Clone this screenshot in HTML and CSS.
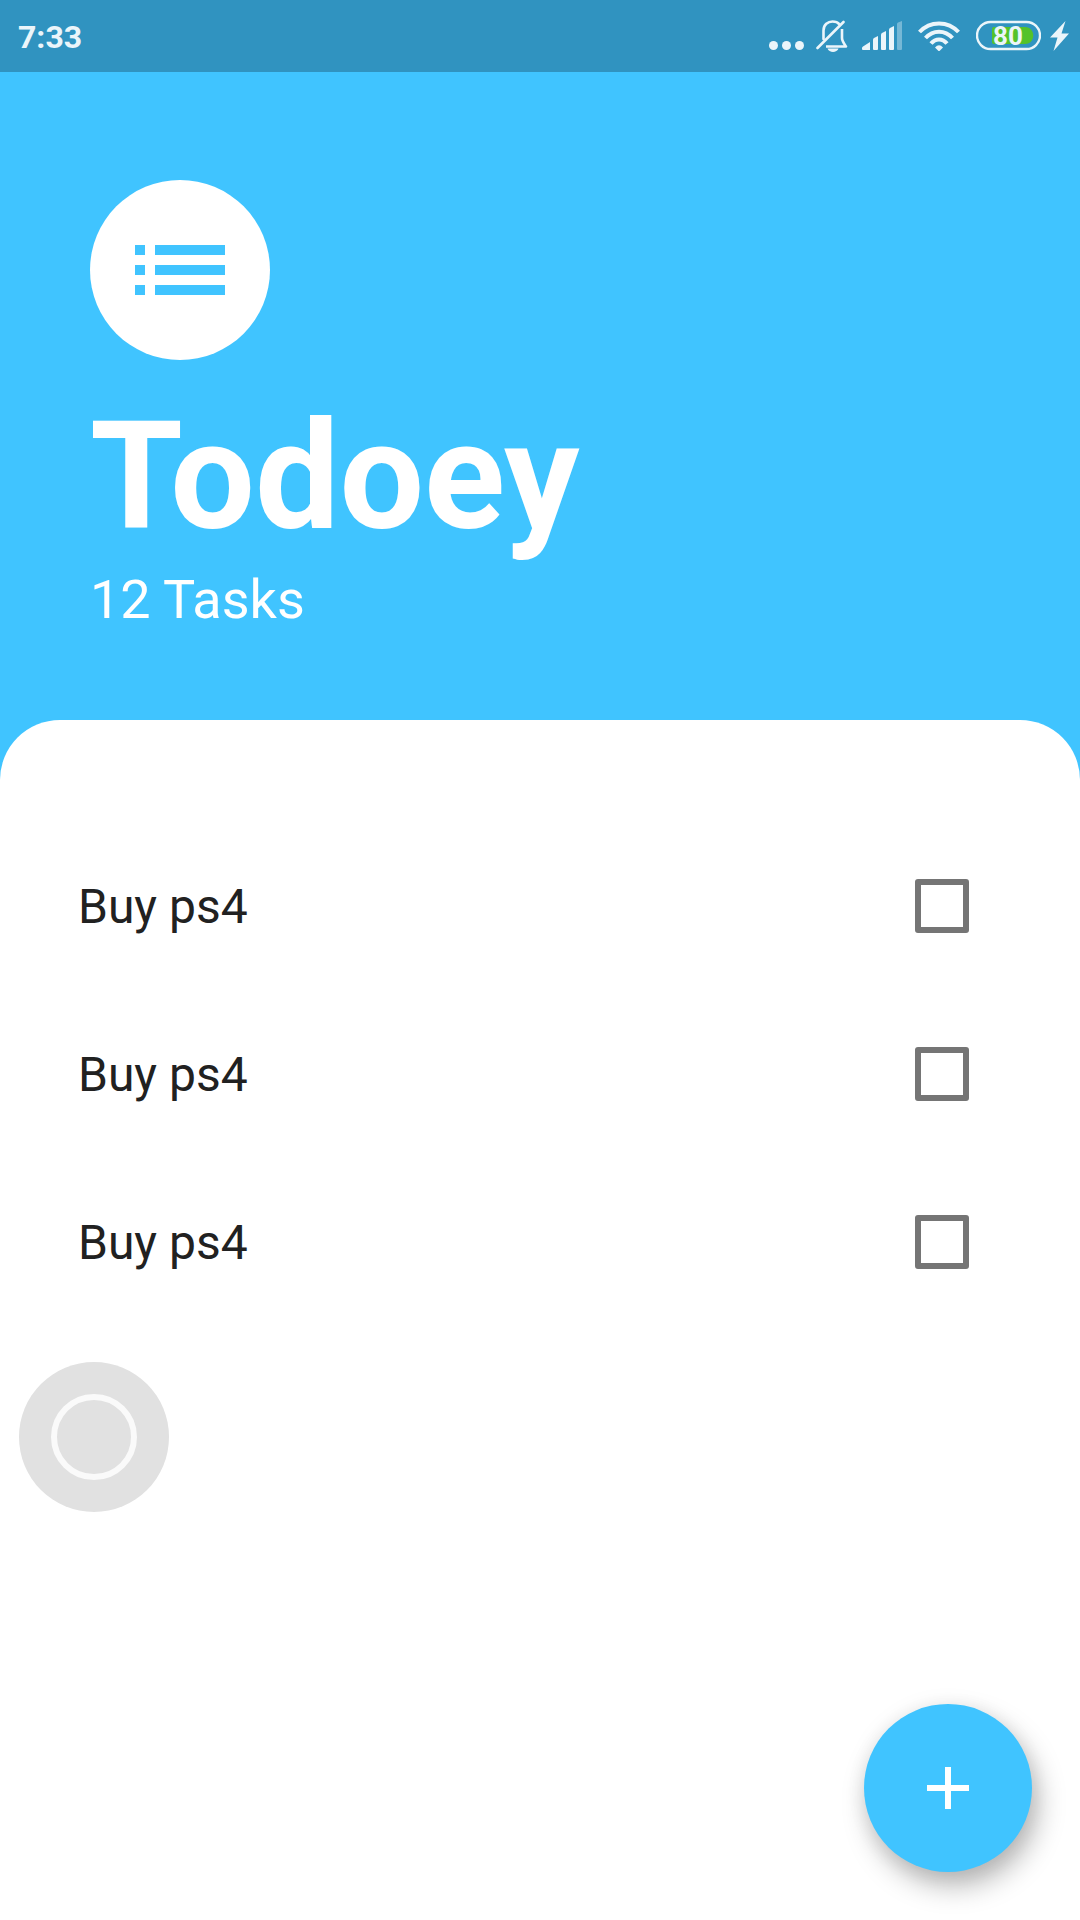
FILE: index.html
```html
<!DOCTYPE html>
<html lang="en">
<head>
<meta charset="utf-8">
<meta name="viewport" content="width=device-width, initial-scale=1">
<title>Todoey</title>
<link rel="stylesheet" href="styles.css">
</head>
<body>
<div class="status-bar">
  <time class="clock">7:33</time>
  <div class="status-icons">
    <svg width="36" height="32" viewBox="0 0 36 32" fill="currentColor" aria-hidden="true">
      <circle cx="5.500" cy="25.500" r="4.500"/><circle cx="18.500" cy="25.500" r="4.500"/><circle cx="31.500" cy="25.500" r="4.500"/>
    </svg>
    <svg class="bell" width="32" height="32" viewBox="0 0 32 32" fill="none" stroke="currentColor" stroke-width="2.6" stroke-linecap="round" stroke-linejoin="round" aria-hidden="true">
      <path d="M7.500 19V10.500C7.500 4.500 12 1.500 16.500 1.500C19.500 1.500 22 2.600 23.500 4.300"/>
      <path d="M26 9V18C26 21 28 23.500 30 26.500H10" stroke-linecap="butt"/>
      <path d="M1.500 28L27.500 2"/>
      <path d="M11.500 28.500H22.500C21 33 13 33 11.500 28.500Z" fill="currentColor" stroke="none"/>
    </svg>
    <svg class="signal" width="40" height="32" viewBox="0 0 40 32" fill="currentColor" aria-hidden="true">
      <path d="M1 26.500L8 22V30H1Q0 30 0 29V28Q0 27 1 26.500Z"/>
      <path d="M11 19.500Q11 18.500 12 18L16 16V29Q16 30 15 30H12Q11 30 11 29Z"/>
      <path d="M19 14.500Q19 13.500 20 13L24 11V29Q24 30 23 30H20Q19 30 19 29Z"/>
      <path d="M27 9.500Q27 8.500 28 8L32 6V29Q32 30 31 30H28Q27 30 27 29Z"/>
      <path opacity=".38" d="M35 4Q35 3 36 2.500L40 1V29Q40 30 39 30H36Q35 30 35 29Z"/>
    </svg>
    <svg class="wifi" width="42" height="32" viewBox="0 0 42 32" fill="none" stroke="currentColor" stroke-width="4" aria-hidden="true">
      <path d="M1.500 12C12 .5 30 .5 40.500 12"/>
      <path d="M7.500 18C15 9.500 27 9.500 34.500 18"/>
      <path d="M13 23.500C17.500 18 24.500 18 29 23.500"/>
      <path d="M17 27.500Q21 23 25 27.500L22 30.500Q21 31.500 20 30.500Z" fill="currentColor" stroke="none"/>
    </svg>
    <svg class="battery" width="65" height="32" viewBox="0 0 65 32" role="img" aria-label="Battery 80%">
      <rect x="1" y="2" width="63" height="27" rx="13.500" fill="none" stroke="currentColor" stroke-width="2.400"/>
      <path fill="#54c22a" d="M18 7H49C60 7 60 24 49 24H18Q16 24 16 22V9Q16 7 18 7Z"/>
      <text class="battery-level" x="32" y="25" text-anchor="middle">80</text>
    </svg>
    <svg class="bolt" width="19" height="32" viewBox="0 0 19 32" fill="currentColor" aria-hidden="true">
      <path d="M15.500 1L0 17.500H7.500L3.500 31L19 13.500H11.500Z"/>
    </svg>
  </div>
</div>
<header class="header">
  <div class="logo">
    <svg width="90" height="50" viewBox="0 0 90 50" fill="currentColor" aria-hidden="true">
      <path d="M0 0H10V10H0ZM20 0H90V10H20ZM0 20H10V30H0ZM20 20H90V30H20ZM0 40H10V50H0ZM20 40H90V50H20Z"/>
    </svg>
  </div>
  <h1 class="title">Todoey</h1>
  <p class="count">12 Tasks</p>
</header>
<main class="sheet">
  <ul class="tasks">
    <li><label class="task"><span class="task-name">Buy ps4</span><input class="check" type="checkbox"></label></li>
    <li><label class="task"><span class="task-name">Buy ps4</span><input class="check" type="checkbox"></label></li>
    <li><label class="task"><span class="task-name">Buy ps4</span><input class="check" type="checkbox"></label></li>
  </ul>
</main>
<button class="assist" type="button" aria-label="Quick menu"></button>
<button class="add" type="button" aria-label="Add task">
  <svg width="42" height="42" viewBox="0 0 42 42" fill="currentColor" aria-hidden="true"><path d="M18 0H24V18H42V24H24V42H18V24H0V18H18Z"/></svg>
</button>
</body>
</html>
```
FILE: styles.css
```css
*,
*::before {
  box-sizing: border-box;
}

body {
  margin: 0;
  min-height: 100vh;
  display: flex;
  flex-direction: column;
  background: #40c4ff;
  font-family: Roboto, "Liberation Sans", sans-serif;
}

svg {
  display: block;
  flex: none;
}

.status-bar {
  display: flex;
  align-items: center;
  justify-content: space-between;
  height: 72px;
  padding: 0 11px 0 18px;
  background: #3093c0;
  color: #ebf5fa;
}

.clock {
  padding-top: 2px;
  font-size: 32px;
  font-weight: 700;
  line-height: 40px;
}

.status-icons {
  display: flex;
  align-items: center;
}

.bell { margin-left: 12px; }
.signal { margin-left: 14px; }
.wifi { margin-left: 16px; }
.battery { margin-left: 16px; }
.bolt { margin-left: 9px; }

.battery-level {
  fill: currentColor;
  font-size: 26px;
  font-weight: 700;
}

.header {
  padding: 108px 90px 84px;
  color: #fff;
}

.logo {
  display: grid;
  place-items: center;
  width: 180px;
  height: 180px;
  margin-bottom: 30px;
  border-radius: 50%;
  background: #fff;
  color: #40c4ff;
}

.title {
  margin: 0;
  font-size: 150px;
  font-weight: 700;
  line-height: 174px;
}

.count {
  margin: 0;
  font-size: 54px;
  line-height: 72px;
}

.sheet {
  flex: 1;
  padding: 102px 111px 60px 78px;
  border-radius: 60px 60px 0 0;
  background: #fff;
}

.tasks {
  margin: 0;
  padding: 0;
  list-style: none;
}

.task {
  display: flex;
  align-items: center;
  justify-content: space-between;
  height: 168px;
  color: #212121;
  font-size: 48px;
  line-height: 56px;
}

.task-name {
  padding-top: 2px;
}

.check {
  appearance: none;
  width: 54px;
  height: 54px;
  margin: 0;
  border: 6px solid #757575;
  border-radius: 3px;
}

.check:checked {
  background: #40c4ff;
}

.assist,
.add {
  position: fixed;
  display: grid;
  place-items: center;
  padding: 0;
  border: 0;
  border-radius: 50%;
}

.assist {
  top: 1362px;
  left: 19px;
  width: 150px;
  height: 150px;
  background: #e1e1e1;
}

.assist::before {
  content: "";
  width: 86px;
  height: 86px;
  border: 6px solid #fafafa;
  border-radius: 50%;
}

.add {
  right: 48px;
  bottom: 48px;
  width: 168px;
  height: 168px;
  background: #40c4ff;
  color: #fff;
  box-shadow: 6px 14px 28px rgba(0, 0, 0, .28), 0 3px 24px rgba(0, 0, 0, .08);
}
```
